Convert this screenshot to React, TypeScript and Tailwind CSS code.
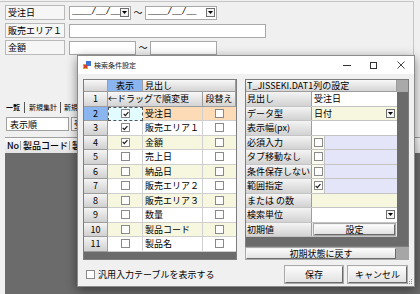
import React from 'react';

type ListRow = { n: number; show?: boolean; label: string; sel?: boolean };

const listRows: ListRow[] = [
  { n: 2, show: true, label: '受注日', sel: true },
  { n: 3, show: true, label: '販売エリア１' },
  { n: 4, show: true, label: '金額' },
  { n: 5, label: '売上日' },
  { n: 6, label: '納品日' },
  { n: 7, label: '販売エリア２' },
  { n: 8, label: '販売エリア３' },
  { n: 9, label: '数量' },
  { n: 10, label: '製品コード' },
  { n: 11, label: '製品名' },
];

// 見出しセル共通
const hdr =
  'bg-linear-to-b from-[#f8f8f8] to-[#d4d4d4] border-r border-b border-[#9d9d9d]';

function Check({ on }: { on?: boolean }) {
  return (
    <span className="inline-flex h-[9px] w-[9px] shrink-0 items-center justify-center border border-[#8a8a8a] bg-white">
      {on && (
        <svg viewBox="0 0 7 7" className="h-[6px] w-[6px]">
          <path d="M0.8 3.4 L2.7 5.4 L6.3 1.2" fill="none" stroke="#1a1a1a" strokeWidth="1.4" />
        </svg>
      )}
    </span>
  );
}

function Drop() {
  return (
    <span className="flex h-[9px] w-[9px] shrink-0 items-center justify-center border border-[#6f6f6f] bg-[#f4f4f4]">
      <svg viewBox="0 0 5 3" className="h-[3px] w-[5px]">
        <path d="M0 0H5L2.5 3Z" fill="#000" />
      </svg>
    </span>
  );
}

function Label({ children }: { children: React.ReactNode }) {
  return (
    <div className="flex h-[15px] w-[60px] items-center border border-[#b9b9b9] bg-[#f6f6f6] pl-[2px]">
      {children}
    </div>
  );
}

function DateBox({ w }: { w: string }) {
  return (
    <div className={`flex h-[14px] items-center border border-[#a8a8a8] bg-white pl-[2px] pr-px ${w}`}>
      <span className="font-['Liberation_Mono',monospace] text-[8.5px] tracking-[-0.3px]">____/__/__</span>
      <span className="ml-auto">
        <Drop />
      </span>
    </div>
  );
}

function Btn({ w, h, children }: { w: string; h: string; children: React.ReactNode }) {
  return (
    <div
      className={`flex items-center justify-center border border-t-[#f4f4f4] border-l-[#f4f4f4] border-r-[#6a6a6a] border-b-[#6a6a6a] bg-linear-to-b from-[#fbfbfb] to-[#e2e2e2] outline outline-1 outline-[#a9a9a9] ${w} ${h}`}
    >
      {children}
    </div>
  );
}

export default function App() {
  return (
    <div className="relative h-[294px] w-[420px] overflow-hidden bg-[#f0f0f0] font-['Noto_Sans_CJK_JP',sans-serif] text-[9px] leading-none text-black">
      {/* 後ろの画面 */}
      <div className="flex h-full flex-col">
        <div className="mt-px h-[64px] w-[414px] border-t border-r border-[#c6c6c6] pl-[5px] pt-[3px]">
          <div className="flex h-[15px] items-center">
            <Label>受注日</Label>
            <div className="ml-[4px]">
              <DateBox w="w-[62px]" />
            </div>
            <span className="w-[14px] text-center">〜</span>
            <DateBox w="w-[72px]" />
          </div>
          <div className="mt-[3px] flex h-[15px] items-center">
            <Label>販売エリア１</Label>
            <div className="ml-[4px] h-[14px] w-[197px] border border-[#a8a8a8] bg-white" />
          </div>
          <div className="mt-[2px] flex h-[15px] items-center">
            <Label>金額</Label>
            <div className="ml-[4px] h-[14px] w-[67px] border border-[#a8a8a8] bg-white" />
            <span className="w-[14px] text-center">〜</span>
            <div className="h-[14px] w-[67px] border border-[#a8a8a8] bg-white" />
          </div>
        </div>

        <div className="mt-[36px] flex h-[12px] w-[77px] items-center overflow-hidden whitespace-nowrap pl-[6px] text-[7px]">
          <span className="font-bold">一覧</span>
          <span className="mx-[4px] h-[11px] border-l border-[#555]" />
          <span>新規集計</span>
          <span className="mx-[3px] h-[11px] border-l border-[#555]" />
          <span>新規</span>
        </div>

        <div className="mt-[4px] flex h-[14px] w-[77px] overflow-hidden pl-[6px]">
          <div className="flex w-[63px] shrink-0 items-center border border-[#a0a0a0] bg-white pl-[3px]">表示順</div>
          <div className="ml-[2px] flex w-[60px] shrink-0 items-center border border-[#a0a0a0] bg-white pl-[2px]">受</div>
        </div>

        <div className="mt-[6px] ml-[5px] flex flex-1 flex-col bg-[#6b6b6b]">
          <div className="flex h-[16px] items-center whitespace-nowrap border-t border-[#a0a0a0] bg-linear-to-b from-[#fafafa] to-[#e4e4e4] font-medium">
            <span className="w-[16px] border-r border-[#a0a0a0] pl-[2px]">No</span>
            <span className="w-[49px] border-r border-[#a0a0a0] pl-[2px]">製品コード</span>
            <span className="w-[7px] overflow-hidden pl-[2px]">製</span>
          </div>
        </div>
      </div>

      {/* 検索条件設定ダイアログ */}
      <div className="absolute left-[77px] top-[55px] flex h-[232px] w-[338px] flex-col border border-[#8c8c8c] bg-[#f0f0f0] shadow-[0_3px_10px_rgba(0,0,0,0.45)]">
        <div className="flex h-[18px] items-center bg-white">
          <svg viewBox="0 0 8 8" className="ml-[5px] h-[8px] w-[8px]">
            <rect x="0" y="3" width="5" height="5" fill="#e8a23a" />
            <rect x="3" y="0" width="5" height="5" fill="#3f74d6" />
            <rect x="1" y="4" width="3" height="3" fill="#d9402b" />
          </svg>
          <span className="ml-[3px] text-[7px] text-[#222]">検索条件設定</span>
          <div className="ml-auto flex h-full">
            <div className="flex w-[27px] items-center justify-center">
              <span className="w-[8px] border-t border-[#333]" />
            </div>
            <div className="flex w-[27px] items-center justify-center">
              <span className="h-[7px] w-[7px] border border-[#333]" />
            </div>
            <div className="flex w-[27px] items-center justify-center">
              <svg viewBox="0 0 8 8" className="h-[8px] w-[8px]">
                <path d="M0.5 0.5L7.5 7.5M7.5 0.5L0.5 7.5" stroke="#333" strokeWidth="0.9" />
              </svg>
            </div>
          </div>
        </div>

        <div className="flex flex-1 flex-col px-[5px] pt-[5px]">
          <div className="flex h-[181px] gap-[8px]">
            {/* 左: 列一覧 */}
            <div className="flex w-[155px] flex-col border border-[#7d7d7d] bg-[#6b6b6b]">
              <div className="flex h-[12px]">
                <div className={`w-[24px] ${hdr}`} />
                <div className="flex w-[35px] items-center justify-center border-r border-b border-[#9d9d9d] bg-[#8ab5ef]">
                  表示
                </div>
                <div className={`flex flex-1 items-center pl-[2px] ${hdr}`}>見出し</div>
              </div>
              <div className="flex h-[14.5px]">
                <div className={`flex w-[24px] items-center justify-center ${hdr}`}>1</div>
                <div className={`flex w-[95px] items-center whitespace-nowrap ${hdr}`}>←ドラッグで順変更</div>
                <div className={`flex flex-1 items-center justify-center ${hdr}`}>段替え</div>
              </div>
              {listRows.map((r) => {
                const bg = r.sel ? 'bg-[#fddbb6]' : r.n % 2 === 0 ? 'bg-[#f7f7df]' : 'bg-white';
                return (
                  <div key={r.n} className="flex h-[14.5px]">
                    <div
                      className={`flex w-[24px] items-center justify-center border-r border-b border-[#9d9d9d] ${
                        r.sel ? 'bg-[#8ab5ef]' : 'bg-linear-to-b from-[#f4f4f4] to-[#d0d0d0]'
                      }`}
                    >
                      {r.n}
                    </div>
                    <div
                      className={`flex w-[35px] items-center justify-center ${
                        r.sel
                          ? 'border border-dashed border-[#555] bg-[#e2fbff]'
                          : `border-r border-b border-[#cfcfcf] ${bg}`
                      }`}
                    >
                      <Check on={r.show} />
                    </div>
                    <div className={`flex w-[60px] items-center border-r border-b border-[#cfcfcf] pl-[2px] ${bg}`}>
                      {r.label}
                    </div>
                    <div className={`flex flex-1 items-center justify-center border-b border-[#cfcfcf] ${bg}`}>
                      <Check />
                    </div>
                  </div>
                );
              })}
            </div>

            {/* 右: 列の設定 */}
            <div className="flex w-[165px] flex-col">
              <div className="flex h-[168px] border border-[#7d7d7d] bg-[#6b6b6b]">
                <div className="flex w-[151px] flex-col">
                  <div className={`flex h-[12px] items-center pl-px ${hdr}`}>T_JISSEKI.DAT1列の設定</div>
                  <PropRow label="見出し">
                    <div className="flex h-full flex-1 items-center bg-white pl-[2px]">受注日</div>
                  </PropRow>
                  <PropRow label="データ型">
                    <div className="flex h-full flex-1 items-center bg-[#f7f7df] pl-[2px] pr-[2px]">
                      日付
                      <span className="ml-auto">
                        <Drop />
                      </span>
                    </div>
                  </PropRow>
                  <PropRow label="表示幅(px)">
                    <div className="h-full flex-1 bg-white" />
                  </PropRow>
                  <PropRow label="必須入力">
                    <CheckCell />
                  </PropRow>
                  <PropRow label="タブ移動なし">
                    <CheckCell />
                  </PropRow>
                  <PropRow label="条件保存しない">
                    <CheckCell />
                  </PropRow>
                  <PropRow label="範囲指定">
                    <CheckCell on />
                  </PropRow>
                  <PropRow label="または の数">
                    <div className="h-full flex-1 bg-[#f7f7df]" />
                  </PropRow>
                  <PropRow label="検索単位">
                    <div className="flex h-full flex-1 items-center bg-white pr-[2px]">
                      <span className="ml-auto">
                        <Drop />
                      </span>
                    </div>
                  </PropRow>
                  <PropRow label="初期値">
                    <div className="flex h-full flex-1 items-center bg-[#ececec] px-[2px] py-px">
                      <Btn w="w-full" h="h-full">
                        設定
                      </Btn>
                    </div>
                  </PropRow>
                </div>
                <div className="flex flex-1 flex-col">
                  <div className="h-[12px] bg-[#a9a9a9]" />
                </div>
              </div>
              <div className="flex h-[13px]">
                <div className="w-[152px] p-px">
                  <Btn w="w-full" h="h-full">
                    初期状態に戻す
                  </Btn>
                </div>
                <div className="flex-1 bg-[#a6a6a6]" />
              </div>
            </div>
          </div>

          <div className="mt-[6px] flex h-[17px] items-center">
            <div className="ml-[3px] flex items-center gap-[3px]">
              <Check />
              <span>汎用入力テーブルを表示する</span>
            </div>
            <div className="mr-[2px] ml-auto flex gap-[5px]">
              <Btn w="w-[58px]" h="h-[17px]">
                保存
              </Btn>
              <Btn w="w-[59px]" h="h-[17px]">
                キャンセル
              </Btn>
            </div>
          </div>
        </div>

        <svg viewBox="0 0 6 6" className="absolute right-px bottom-px h-[6px] w-[6px]">
          <g fill="#8a8a8a">
            <rect x="4" y="0" width="1" height="1" />
            <rect x="2" y="2" width="1" height="1" />
            <rect x="4" y="2" width="1" height="1" />
            <rect x="0" y="4" width="1" height="1" />
            <rect x="2" y="4" width="1" height="1" />
            <rect x="4" y="4" width="1" height="1" />
          </g>
        </svg>
      </div>
    </div>
  );
}

function PropRow({ label, children }: { label: string; children: React.ReactNode }) {
  return (
    <div className="flex h-[14.5px] border-b border-[#c4c4c4]">
      <div className="flex w-[66px] items-center whitespace-nowrap border-r border-[#9d9d9d] bg-linear-to-b from-[#f4f4f4] to-[#d2d2d2] pl-px">
        {label}
      </div>
      {children}
    </div>
  );
}

function CheckCell({ on }: { on?: boolean }) {
  return (
    <div className="flex h-full flex-1">
      <div className="flex w-[13px] items-center justify-center border-r border-[#c4c4c4] bg-[#fbfbef]">
        <Check on={on} />
      </div>
      <div className="flex-1 bg-[#e5e5fa]" />
    </div>
  );
}
